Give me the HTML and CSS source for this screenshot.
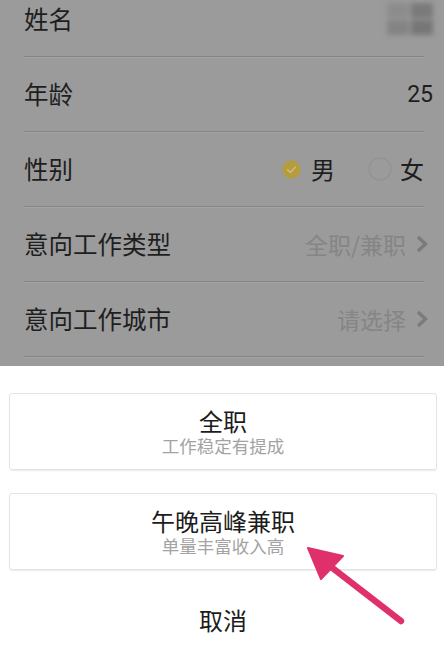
FILE: index.html
```html
<!DOCTYPE html>
<html lang="zh-CN">
<head>
<meta charset="utf-8">
<link rel="stylesheet" href="styles.css">
</head>
<body>
<div class="page">
  <div class="form">
    <div class="row first">
      <span class="label">姓名</span>
      <span class="mosaic"><i></i><i></i><i></i><i></i></span>
    </div>
    <div class="row">
      <span class="label">年龄</span>
      <span class="num">25</span>
    </div>
    <div class="row">
      <span class="label">性别</span>
      <span class="radios">
        <span class="radio checked"><svg viewBox="0 0 20 20" width="19" height="19"><circle cx="10" cy="10" r="9.5" fill="#b79c3c"/><path d="M5.5 10.2 L8.8 13 L14.5 7.2" fill="none" stroke="#c9bb8c" stroke-width="1.6"/></svg></span>
        <span class="opt">男</span>
        <span class="radio"><svg viewBox="0 0 24 24" width="24" height="24"><circle cx="12" cy="12" r="11" fill="none" stroke="#929292" stroke-width="1.2"/></svg></span>
        <span class="opt">女</span>
      </span>
    </div>
    <div class="row">
      <span class="label">意向工作类型</span>
      <span class="value">全职/兼职<svg class="chev" viewBox="0 0 14 20" width="14" height="20"><path d="M3 3 L10.5 10 L3 17" fill="none" stroke="#7b7b7b" stroke-width="3.4"/></svg></span>
    </div>
    <div class="row">
      <span class="label">意向工作城市</span>
      <span class="value">请选择<svg class="chev" viewBox="0 0 14 20" width="14" height="20"><path d="M3 3 L10.5 10 L3 17" fill="none" stroke="#7b7b7b" stroke-width="3.4"/></svg></span>
    </div>
  </div>
  <div class="sheet">
    <div class="card">
      <div class="title">全职</div>
      <div class="sub">工作稳定有提成</div>
    </div>
    <div class="card">
      <div class="title">午晚高峰兼职</div>
      <div class="sub">单量丰富收入高</div>
    </div>
    <div class="cancel">取消</div>
  </div>
  <svg class="arrow" viewBox="0 0 444 645" width="444" height="645">
    <line x1="401" y1="621" x2="326" y2="563" stroke="#e0306c" stroke-width="6.5" stroke-linecap="round"/>
    <polygon points="308,548 343,556 321,579" fill="#e0306c" stroke="#e0306c" stroke-width="2" stroke-linejoin="round"/>
  </svg>
</div>
</body>
</html>
```
FILE: styles.css
```css
* { box-sizing: border-box; }
html, body { margin: 0; padding: 0; }
body {
  width: 444px;
  height: 645px;
  overflow: hidden;
  font-family: "Noto Sans CJK SC", "Noto Sans", sans-serif;
  background: #fff;
}
.page {
  position: relative;
  width: 444px;
  height: 645px;
  overflow: hidden;
}
.form {
  display: flow-root;
  background: #9b9b9b;
  height: 366px;
  padding: 0 20px 0 24px;
}
.row {
  height: 75px;
  border-bottom: 1px solid #858585;
  display: flex;
  align-items: center;
  justify-content: space-between;
  position: relative;
}
.row.first { margin-top: -18px; }
.row::after {
  content: "";
  position: absolute;
  left: 0; right: 0; bottom: -2px;
  height: 1px;
  background: #a3a3a3;
}
.label {
  font-size: 24.5px;
  color: #1e1e1e;
  line-height: 1;
}
.num {
  font-family: "Roboto", "Noto Sans", sans-serif;
  font-size: 23px;
  color: #1e1e1e;
  margin-right: -9px;
}
.mosaic {
  display: grid;
  grid-template-columns: 22px 22px;
  grid-template-rows: 15px 15px;
  gap: 2px;
  margin-right: -9px;
  filter: blur(2.5px);
}
.mosaic i { display: block; background: #858585; }
.mosaic i:nth-child(1) { background: #8c8c8c; }
.mosaic i:nth-child(2) { background: #7a7a7a; }
.mosaic i:nth-child(3) { background: #848484; }
.mosaic i:nth-child(4) { background: #777777; }
.radios {
  display: flex;
  align-items: center;
}
.radio { display: flex; align-items: center; }
.radio.checked { margin-right: 10px; }
.opt {
  font-size: 24px;
  color: #1e1e1e;
  line-height: 1;
}
.opt + .radio { margin-left: 33px; margin-right: 8px; }
.value {
  font-size: 23px;
  color: #858585;
  display: flex;
  align-items: center;
  gap: 9px;
  margin-right: -5px;
}
.chev { display: block; }
.sheet {
  padding: 27px 7px 0 9px;
  display: flex;
  flex-direction: column;
  gap: 23px;
}
.card {
  height: 77px;
  border: 1px solid #e4e4e4;
  border-radius: 3px;
  box-shadow: 0 1px 1px #ececec;
  display: flex;
  flex-direction: column;
  align-items: center;
  justify-content: center;
}
.title {
  font-size: 24px;
  color: #1c1c1c;
  line-height: 28px;
}
.sub {
  font-size: 17.5px;
  color: #a3a3a3;
  line-height: 22px;
}
.cancel {
  text-align: center;
  font-size: 24px;
  color: #1c1c1c;
  margin-top: 9px;
}
.arrow {
  position: absolute;
  left: 0; top: 0;
  pointer-events: none;
}
```
